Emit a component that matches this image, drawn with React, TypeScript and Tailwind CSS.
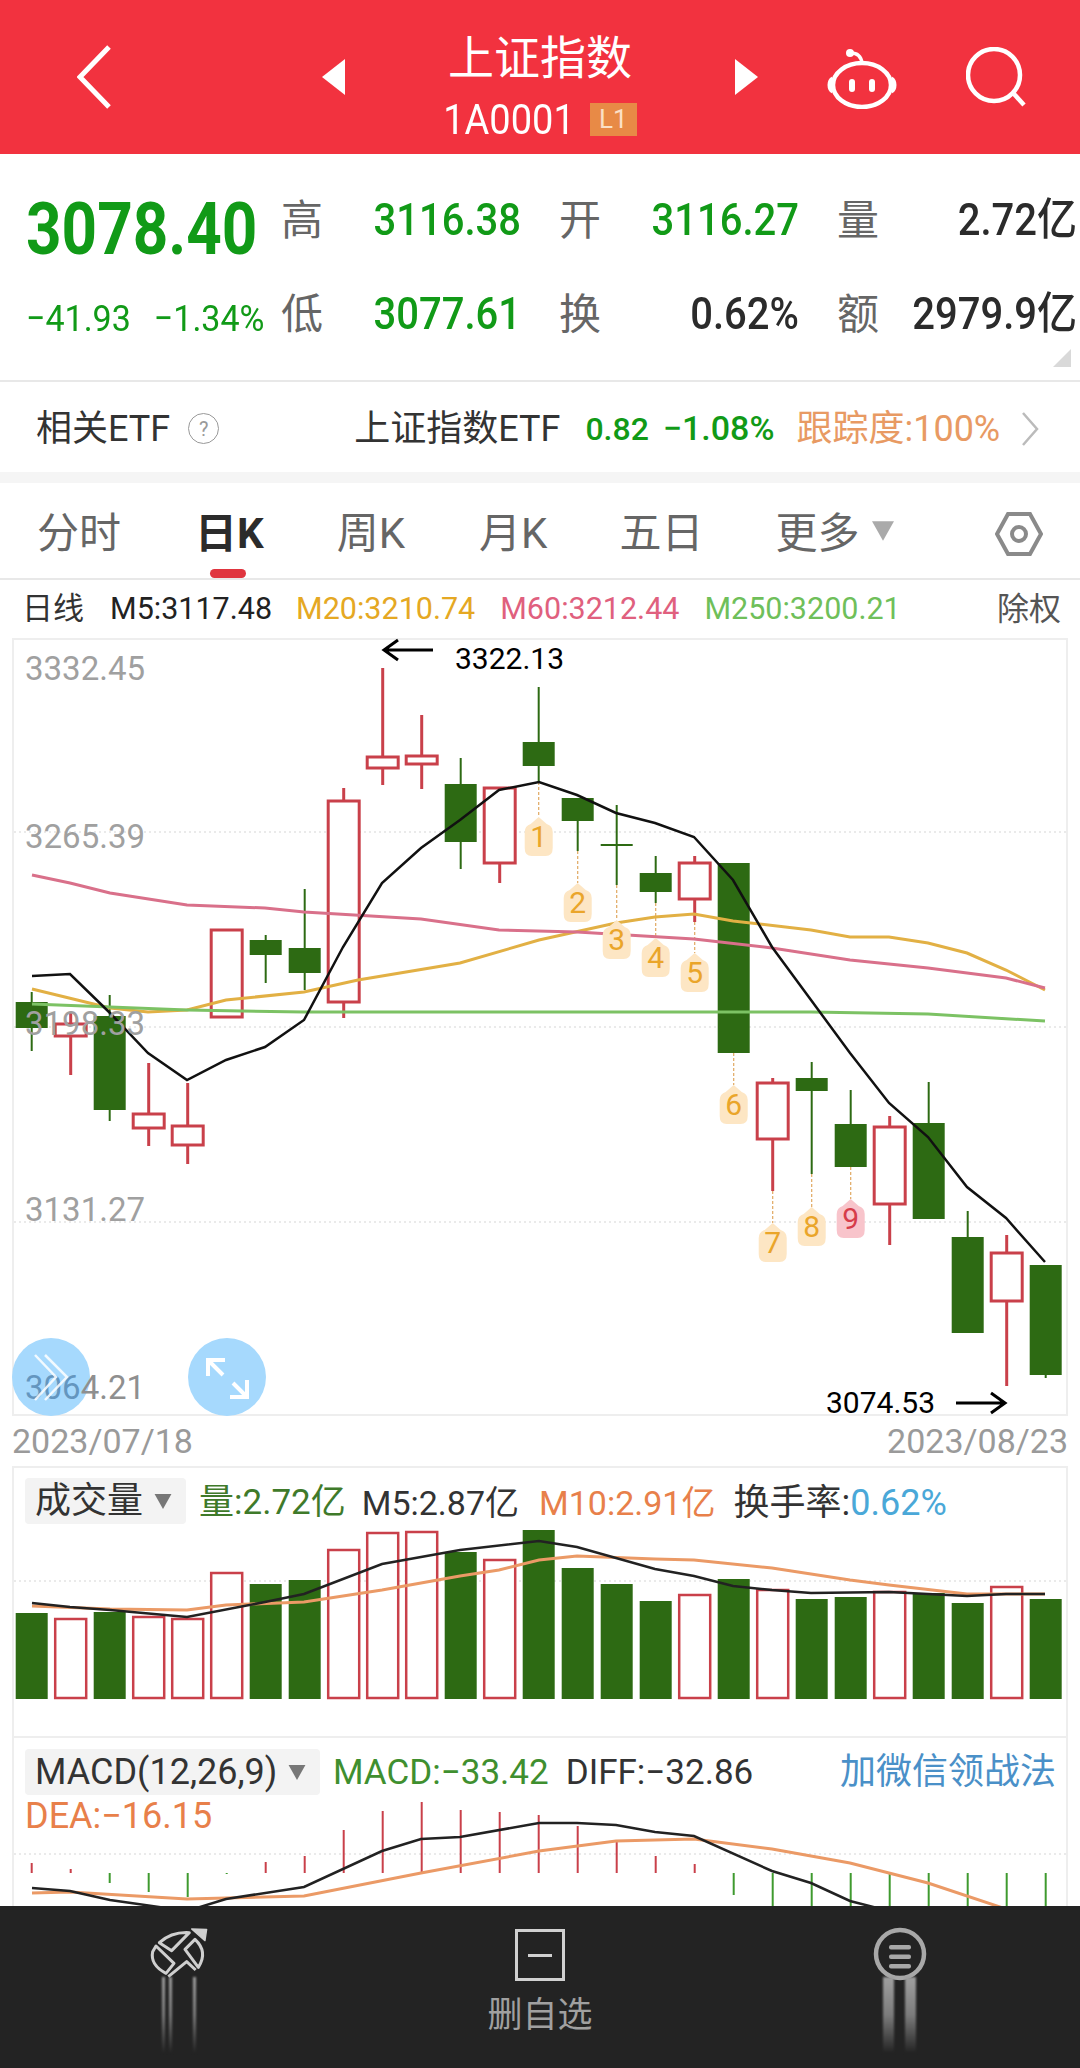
const UP = '#c9404a'
const DOWN = '#2d6a13'

const xAt = (i: number) => 31.7 + 39 * i

// [up?, bodyTop, bodyBottom, wickTop, wickBottom]
const CANDLES: [boolean, number, number, number, number][] = [
  [false, 1002, 1028, 992, 1051],
  [true, 1024, 1036, 1012, 1075],
  [false, 1016, 1110, 995, 1121],
  [true, 1114, 1128, 1063, 1146],
  [true, 1126, 1145, 1083, 1164],
  [true, 930, 1017, 930, 1017],
  [false, 940, 955, 935, 983],
  [false, 948, 973, 889, 990],
  [true, 801, 1002, 788, 1018],
  [true, 757, 768, 668, 785],
  [true, 756, 764, 715, 789],
  [false, 784, 842, 758, 869],
  [true, 788, 863, 788, 883],
  [false, 742, 766, 687, 782],
  [false, 798, 821, 798, 851],
  [false, 844, 846, 805, 885],
  [false, 873, 892, 856, 903],
  [true, 863, 899, 856, 922],
  [false, 863, 1053, 863, 1053],
  [true, 1083, 1139, 1078, 1191],
  [false, 1078, 1091, 1062, 1174],
  [false, 1124, 1167, 1090, 1167],
  [true, 1127, 1204, 1116, 1245],
  [false, 1123, 1219, 1082, 1219],
  [false, 1237, 1333, 1211, 1333],
  [true, 1253, 1301, 1235, 1386],
  [false, 1265, 1375, 1265, 1378],
]

const MA5 = '32,976 70,974 110,1013 148,1053 187,1080 226,1060 265,1047 304,1020 343,947 382,883 421,848 460,820 499,790 539,782 577,795 616,813 655,823 694,837 733,880 772,947 811,1000 850,1053 889,1103 928,1137 967,1187 1006,1218 1045,1262'
const MA20 = '32,989 110,1008 148,1012 187,1010 226,1000 304,992 358,980 460,963 539,940 616,923 655,917 694,914 733,921 811,930 850,937 889,937 928,943 967,953 1006,970 1045,990'
const MA60 = '32,875 70,883 110,893 187,905 265,908 304,912 421,919 499,930 577,932 694,939 772,948 850,960 928,968 1006,978 1045,988'
const MA250 = '32,1004 110,1007 187,1010 304,1012 811,1012 928,1014 1045,1021'

// [digit, candle index, top, wire from]
const BADGES: [number, number, number, number][] = [
  [1, 13, 817, 782],
  [2, 14, 883, 851],
  [3, 15, 920, 885],
  [4, 16, 938, 903],
  [5, 17, 953, 922],
  [6, 18, 1085, 1053],
  [7, 19, 1223, 1191],
  [8, 20, 1207, 1174],
  [9, 21, 1199, 1167],
]

const VOL_TOPS = [1613, 1619, 1612, 1617, 1619, 1573, 1584, 1580, 1550, 1533, 1532, 1552, 1560, 1530, 1568, 1584, 1601, 1595, 1579, 1590, 1599, 1597, 1592, 1593, 1603, 1587, 1599]
const VOL_BLACK = '32,1603 70,1607 110,1610 187,1617 265,1602 304,1594 382,1564 460,1550 539,1541 577,1547 655,1569 694,1576 733,1586 772,1590 811,1593 889,1592 967,1596 1006,1594 1045,1594'
const VOL_ORANGE = '32,1606 110,1609 187,1610 226,1605 304,1602 382,1590 460,1576 499,1570 539,1560 577,1556 655,1559 694,1560 772,1568 850,1580 889,1585 967,1594 1045,1594'

const MACD_BARS = [-10, -4, 10, 19, 24, 1, -11, -17, -43, -62, -71, -63, -61, -58, -47, -33, -17, -9, 22, 36, 36, 36, 36, 36, 36, 36, 36]
const DIFF = '32,1885 70,1888 110,1897 187,1908 226,1896 304,1884 382,1848 421,1836 460,1834 539,1820 577,1820 616,1822 655,1829 694,1833 772,1868 811,1880 850,1898 889,1908'
const DEA = '32,1890 70,1889 187,1896 304,1893 421,1870 539,1848 616,1838 694,1836 772,1846 850,1860 928,1880 1006,1906'

function Caret({ className }: { className: string }) {
  return (
    <svg viewBox="0 0 18 16" className={className}>
      <path d="M0 0h18L9 16z" fill="currentColor" />
    </svg>
  )
}

function Header() {
  return (
    <div className="flex h-[154px] items-center bg-[#f2323f] text-white">
      <div className="flex w-[322px] pl-[77px]">
        <svg viewBox="0 0 34 64" className="h-[64px] w-[34px]" fill="none" stroke="currentColor" strokeWidth="5">
          <path d="M32 2L3 32l29 30" />
        </svg>
      </div>
      <svg viewBox="0 0 23 36" className="h-[36px] w-[23px]"><path d="M23 0v36L0 18z" fill="currentColor" /></svg>
      <div className="flex h-full w-[390px] flex-col items-center pt-[26px]">
        <div className="text-[46px] leading-[56px] font-['Noto_Sans_CJK_SC',sans-serif]">上证指数</div>
        <div className="mt-[18px] flex items-center gap-[15px]">
          <span className="origin-center scale-y-[1.12] text-[38px] leading-[38px]">1A0001</span>
          <span className="flex h-[33px] w-[47px] items-center justify-center bg-[#e88a46] text-[26px] text-[#fbe0c6]">L1</span>
        </div>
      </div>
      <svg viewBox="0 0 23 36" className="h-[36px] w-[23px]"><path d="M0 0v36L23 18z" fill="currentColor" /></svg>
      <svg viewBox="0 0 70 64" className="ml-[69px] h-[64px] w-[70px]" fill="none" stroke="currentColor" strokeWidth="4.5">
        <ellipse cx="35" cy="40" rx="29" ry="22" />
        <path d="M6 34c-4 2-4 10 0 12M64 34c4 2 4 10 0 12" strokeWidth="5" />
        <path d="M24 8c6 0 10 3 11 10" strokeWidth="3.5" />
        <circle cx="23" cy="8" r="4" fill="currentColor" stroke="none" />
        <rect x="22" y="34" width="6" height="13" rx="3" fill="currentColor" stroke="none" />
        <rect x="42" y="34" width="6" height="13" rx="3" fill="currentColor" stroke="none" />
      </svg>
      <svg viewBox="0 0 60 60" className="ml-[69px] h-[60px] w-[60px]" fill="none" stroke="currentColor" strokeWidth="4.5">
        <circle cx="28" cy="28" r="26" />
        <path d="M48 47l10 11" />
      </svg>
    </div>
  )
}

function Stat({ label, value, green }: { label: string; value: string; green?: boolean }) {
  return (
    <div className="flex w-[240px] items-center justify-between">
      <span className="text-[42px] text-[#666]">{label}</span>
      <span className={`scale-y-[1.12] text-[40px] font-medium ${green ? 'text-[#119a17]' : 'text-[#2b2b2b]'}`}>{value}</span>
    </div>
  )
}

function Stats() {
  return (
    <div className="relative h-[228px] border-b-2 border-[#e8e8e8]">
      <div className="absolute right-[9px] bottom-[13px] h-0 w-0 border-b-[18px] border-l-[18px] border-b-[#d9d9d9] border-l-transparent" />
      <div className="flex pt-[19px]">
        <div className="w-[281px] pl-[26px] text-[#119a17]">
          <div className="h-[94px] origin-center scale-y-[1.15] pt-[8px] text-[62px] leading-[96px] font-bold">3078.40</div>
          <div className="flex h-[94px] gap-[23px] pt-[6px] text-[34px] leading-[90px]">
            <span className="scale-y-[1.1]">−41.93</span>
            <span className="scale-y-[1.1]">−1.34%</span>
          </div>
        </div>
        <div className="flex flex-col">
          <div className="flex h-[94px] items-center gap-[38px]">
            <Stat label="高" value="3116.38" green />
            <Stat label="开" value="3116.27" green />
            <Stat label="量" value="2.72亿" />
          </div>
          <div className="flex h-[94px] items-center gap-[38px]">
            <Stat label="低" value="3077.61" green />
            <Stat label="换" value="0.62%" />
            <Stat label="额" value="2979.9亿" />
          </div>
        </div>
      </div>
    </div>
  )
}

function EtfRow() {
  return (
    <div className="flex h-[90px] items-center pt-[3px] text-[36px] text-[#333]">
      <span className="ml-[36px]">相关ETF</span>
      <span className="ml-[18px] flex h-[31px] w-[31px] items-center justify-center rounded-full border border-[#999] text-[20px] text-[#999]">?</span>
      <span className="ml-[135px]">上证指数ETF</span>
      <span className="ml-[25px] text-[32px] font-medium text-[#119a17]">0.82</span>
      <span className="ml-[14px] text-[34px] font-medium text-[#119a17]">−1.08%</span>
      <span className="ml-[22px] text-[#e89a63]">跟踪度:100%</span>
      <svg viewBox="0 0 18 34" className="ml-[21px] h-[34px] w-[18px]" fill="none" stroke="#bbb" strokeWidth="2.5">
        <path d="M2 1l14 16L2 33" />
      </svg>
    </div>
  )
}

function Tabs() {
  return (
    <div className="relative flex h-[97px] items-center border-b-2 border-[#e8e8e8] pt-[6px] text-[42px] text-[#666]">
      <span className="ml-[37px]">分时</span>
      <span className="ml-[74px] font-bold text-[#2b2b2b]">日K</span>
      <span className="ml-[73px]">周K</span>
      <span className="ml-[74px]">月K</span>
      <span className="ml-[72px]">五日</span>
      <span className="ml-[72px]">更多</span>
      <Caret className="mb-[6px] ml-[13px] h-[20px] w-[22px] text-[#aaa]" />
      <svg viewBox="0 0 48 46" className="ml-[101px] h-[46px] w-[48px]" fill="none" stroke="#8a8a8a" strokeWidth="4">
        <path d="M13 3h22l11 20-11 20H13L2 23z" />
        <circle cx="24" cy="23" r="7" />
      </svg>
      <div className="absolute bottom-0 left-[210px] h-[9px] w-[36px] rounded-full bg-[#e0353f]" />
    </div>
  )
}

function Legend() {
  return (
    <div className="flex h-[58px] items-center text-[30.5px]">
      <span className="ml-[22px] text-[31px] text-[#333]">日线</span>
      <span className="ml-[26px] text-[#222]">M5:3117.48</span>
      <span className="ml-[24px] text-[#e5a823]">M20:3210.74</span>
      <span className="ml-[25px] text-[#e0607e]">M60:3212.44</span>
      <span className="ml-[25px] text-[#6fbf5a]">M250:3200.21</span>
      <span className="ml-auto mr-[19px] text-[32px] text-[#555]">除权</span>
    </div>
  )
}

function PriceChart() {
  return (
    <div className="mx-[12px] h-[778px] w-[1056px] border-2 border-[#eeeeee]">
      <svg viewBox="14 640 1052 774" className="block h-full w-full overflow-visible">
        {[832, 1027, 1222].map((y) => (
          <line key={y} x1="14" x2="1066" y1={y} y2={y} stroke="#e4e4e4" strokeWidth="1.5" strokeDasharray="2 3" />
        ))}
        {BADGES.map(([, i, top, from]) => (
          <line key={i} x1={xAt(i)} x2={xAt(i)} y1={from} y2={top} stroke="#e0a860" strokeWidth="1.2" strokeDasharray="3 2" />
        ))}
        {CANDLES.map(([up, top, bottom, wickTop, wickBottom], i) => {
          const x = xAt(i)
          return (
            <g key={i}>
              <line x1={x} x2={x} y1={wickTop} y2={wickBottom} stroke={up ? UP : DOWN} strokeWidth={up ? 3 : 2} />
              {up ? (
                <rect x={x - 15.5} y={top} width="31" height={bottom - top} fill="#fff" stroke={UP} strokeWidth="3" />
              ) : (
                <rect x={x - 16} y={top} width="32" height={bottom - top} fill={DOWN} />
              )}
            </g>
          )
        })}
        <polyline points={MA20} fill="none" stroke="#e2b044" strokeWidth="3" />
        <polyline points={MA60} fill="none" stroke="#d9708a" strokeWidth="3" />
        <polyline points={MA250} fill="none" stroke="#7cc264" strokeWidth="3" />
        <polyline points={MA5} fill="none" stroke="#111" strokeWidth="2.5" />
        {BADGES.map(([n, i, top]) => {
          const x = xAt(i)
          const pink = n === 9
          return (
            <g key={n}>
              <path
                d={`M${x} ${top}l8 7q6 2 6 8v16q0 8-7 8h-14q-7 0-7-8v-16q0-6 6-8z`}
                fill={pink ? '#f8c4cb' : '#fde6c4'}
              />
              <text x={x} y={top + 30} textAnchor="middle" className={`text-[30px] font-['Roboto',sans-serif] ${pink ? 'fill-[#d63c4a]' : 'fill-[#eaa52a]'}`}>{n}</text>
            </g>
          )
        })}
        {([['3332.45', 680], ['3265.39', 848], ['3198.33', 1035], ['3131.27', 1221]] as [string, number][]).map(([label, y]) => (
          <text key={label} x="25" y={y} className="fill-[#a0a0a0] text-[33px] font-['Roboto',sans-serif]">{label}</text>
        ))}
        <path d="M433 650H384M398 640l-14 10 14 10" fill="none" stroke="#000" strokeWidth="3" />
        <text x="455" y="669" className="fill-black text-[30px] font-['Roboto',sans-serif]">3322.13</text>
        <text x="826" y="1413" className="fill-black text-[30px] font-['Roboto',sans-serif]">3074.53</text>
        <path d="M956 1403h49M991 1393l14 10-14 10" fill="none" stroke="#000" strokeWidth="3" />
        <circle cx="51" cy="1377" r="39" fill="#a6d9fd" />
        <circle cx="227" cy="1377" r="39" fill="#a6d9fd" />
        <text x="25" y="1399" className="fill-[#8f8f8f] text-[33px] font-['Roboto',sans-serif]">
          <tspan fill="#6496bf">306</tspan>4.21
        </text>
        <path d="M35 1355l21 22-21 23M45 1355l22 22-22 23" fill="none" stroke="#fff" strokeWidth="2.5" opacity="0.85" />
        <g fill="none" stroke="#fff" strokeWidth="4">
          <path d="M209 1361l14 14M208 1376v-16h17" />
          <path d="M247 1397l-14-14M247 1380v17h-17" />
        </g>
      </svg>
    </div>
  )
}

function Chip({ children, className }: { children: React.ReactNode; className: string }) {
  return (
    <div className={`flex h-[46px] items-center justify-between rounded-[4px] bg-[#f3f3f3] text-[#333] ${className}`}>
      {children}
      <Caret className="h-[15px] w-[18px] text-[#777]" />
    </div>
  )
}

function VolumePanel() {
  return (
    <div className="mx-[12px] h-[270px] w-[1056px] border-x-2 border-t-2 border-[#eeeeee]">
      <div className="flex h-[56px] pt-[10px] pl-[11px] text-[34px]">
        <Chip className="w-[161px] pr-[14px] pl-[10px]"><span className="text-[36px]">成交量</span></Chip>
        <span className="ml-[13px] text-[35px] leading-[50px] text-[#3f7a2a]">量:2.72亿</span>
        <span className="ml-[16px] leading-[50px] text-[#333]">M5:2.87亿</span>
        <span className="ml-[20px] leading-[50px] text-[#e8804a]">M10:2.91亿</span>
        <span className="ml-[18px] text-[36px] leading-[50px] text-[#333]">换手率:<span className="text-[#4aa8d8]">0.62%</span></span>
      </div>
      <svg viewBox="14 1524 1052 176" className="block h-[176px] w-[1052px] overflow-visible">
        <line x1="14" x2="1066" y1="1581" y2="1581" stroke="#e4e4e4" strokeWidth="1.5" strokeDasharray="2 3" />
        {VOL_TOPS.map((top, i) => {
          const up = CANDLES[i][0]
          const x = xAt(i)
          return up ? (
            <rect key={i} x={x - 15.5} y={top} width="31" height={1698 - top} fill="#fff" stroke={UP} strokeWidth="2.5" />
          ) : (
            <rect key={i} x={x - 16} y={top} width="32" height={1699 - top} fill={DOWN} />
          )
        })}
        <polyline points={VOL_ORANGE} fill="none" stroke="#eb9a66" strokeWidth="3" />
        <polyline points={VOL_BLACK} fill="none" stroke="#222" strokeWidth="2.5" />
      </svg>
    </div>
  )
}

function MacdPanel() {
  return (
    <div className="relative mx-[12px] h-[170px] w-[1056px] overflow-hidden border-x-2 border-t-2 border-[#eeeeee]">
      <div className="relative flex pt-[11px] pl-[11px] text-[36px]">
        <Chip className="w-[295px] pr-[14px] pl-[10px]"><span>MACD(12,26,9)</span></Chip>
        <span className="ml-[13px] text-[35px] leading-[48px] text-[#3f8f2f]">MACD:−33.42</span>
        <span className="ml-[17px] text-[35px] leading-[48px] text-[#333]">DIFF:−32.86</span>
        <span className="ml-auto mr-[10px] leading-[46px] text-[#4a90c8]">加微信领战法</span>
      </div>
      <div className="relative pl-[11px] text-[36px] leading-[38px] text-[#e8804a]">DEA:−16.15</div>
      <svg viewBox="14 1796 1052 110" className="mt-[-36px] block h-[110px] w-[1052px]">
        <line x1="14" x2="1066" y1="1851" y2="1851" stroke="#e4e4e4" strokeWidth="1.5" strokeDasharray="2 3" />
        {MACD_BARS.map((v, i) => (
          <line key={i} x1={xAt(i)} x2={xAt(i)} y1={1870} y2={1870 + v} stroke={v < 0 ? UP : '#3f9a2f'} strokeWidth="2" />
        ))}
        <polyline points={DEA} fill="none" stroke="#eb9a66" strokeWidth="3" />
        <polyline points={DIFF} fill="none" stroke="#222" strokeWidth="2.5" />
      </svg>
    </div>
  )
}

function Tail({ x, w }: { x: number; w: number }) {
  return <rect x={x} y="67" width={w} height="76" fill="url(#tail)" className="blur-[1px]" />
}

function TailGradient() {
  return (
    <defs>
      <linearGradient id="tail" x1="0" y1="0" x2="0" y2="1">
        <stop offset="0" stopColor="#a0a0a0" />
        <stop offset="0.5" stopColor="#7c7c7c" />
        <stop offset="1" stopColor="#232323" />
      </linearGradient>
    </defs>
  )
}

function BottomBar() {
  return (
    <div className="flex h-[162px] bg-[#232323] pt-[4px] pl-[130px]">
      <svg viewBox="0 0 100 150" className="h-[150px] w-[100px]">
        <TailGradient />
        <g transform="scale(0.3333)" fill="none" stroke="#cfcfcf" strokeWidth="9" strokeLinejoin="round">
          <path d="M88 98Q125 65 178 68L125 122Z" />
          <path d="M78 108L132 160L108 190Q60 165 68 125Z" />
          <path d="M165 118L195 88Q235 125 205 172Z" />
          <path d="M115 200L170 155L197 180" />
          <path d="M185 57L230 58L225 92Z" fill="#cfcfcf" strokeWidth="4" />
        </g>
        <Tail x={32} w={3} />
        <Tail x={39} w={3} />
        <Tail x={63} w={3} />
      </svg>
      <div className="flex w-[620px] flex-col items-center pt-[19px]">
        <div className="flex h-[52px] w-[50px] items-center justify-center border-[3px] border-[#d0d0d0]">
          <div className="h-[3px] w-[24px] bg-[#d0d0d0]" />
        </div>
        <div className="mt-[12px] text-[35px] leading-[46px] text-[#a0a0a0]">删自选</div>
      </div>
      <svg viewBox="0 0 100 150" className="h-[150px] w-[100px]">
        <TailGradient />
        <circle cx="50" cy="44" r="24" fill="none" stroke="#a8a8a8" strokeWidth="4.5" />
        <rect x="39" y="35" width="22" height="4.5" rx="2" fill="#a8a8a8" />
        <rect x="39" y="44.5" width="22" height="4.5" rx="2" fill="#a8a8a8" />
        <rect x="39" y="54" width="22" height="4.5" rx="2" fill="#a8a8a8" />
        <Tail x={33} w={11} />
        <Tail x={55} w={11} />
      </svg>
    </div>
  )
}

export default function App() {
  return (
    <div className="h-[2068px] w-[1080px] overflow-hidden bg-white font-['Roboto','Noto_Sans_CJK_SC',sans-serif]">
      <Header />
      <Stats />
      <EtfRow />
      <div className="h-[11px] bg-[#f5f5f5]" />
      <Tabs />
      <Legend />
      <PriceChart />
      <div className="flex h-[50px] items-center justify-between px-[12px] text-[34px] text-[#9a9a9a]">
        <span>2023/07/18</span>
        <span>2023/08/23</span>
      </div>
      <VolumePanel />
      <MacdPanel />
      <BottomBar />
    </div>
  )
}
